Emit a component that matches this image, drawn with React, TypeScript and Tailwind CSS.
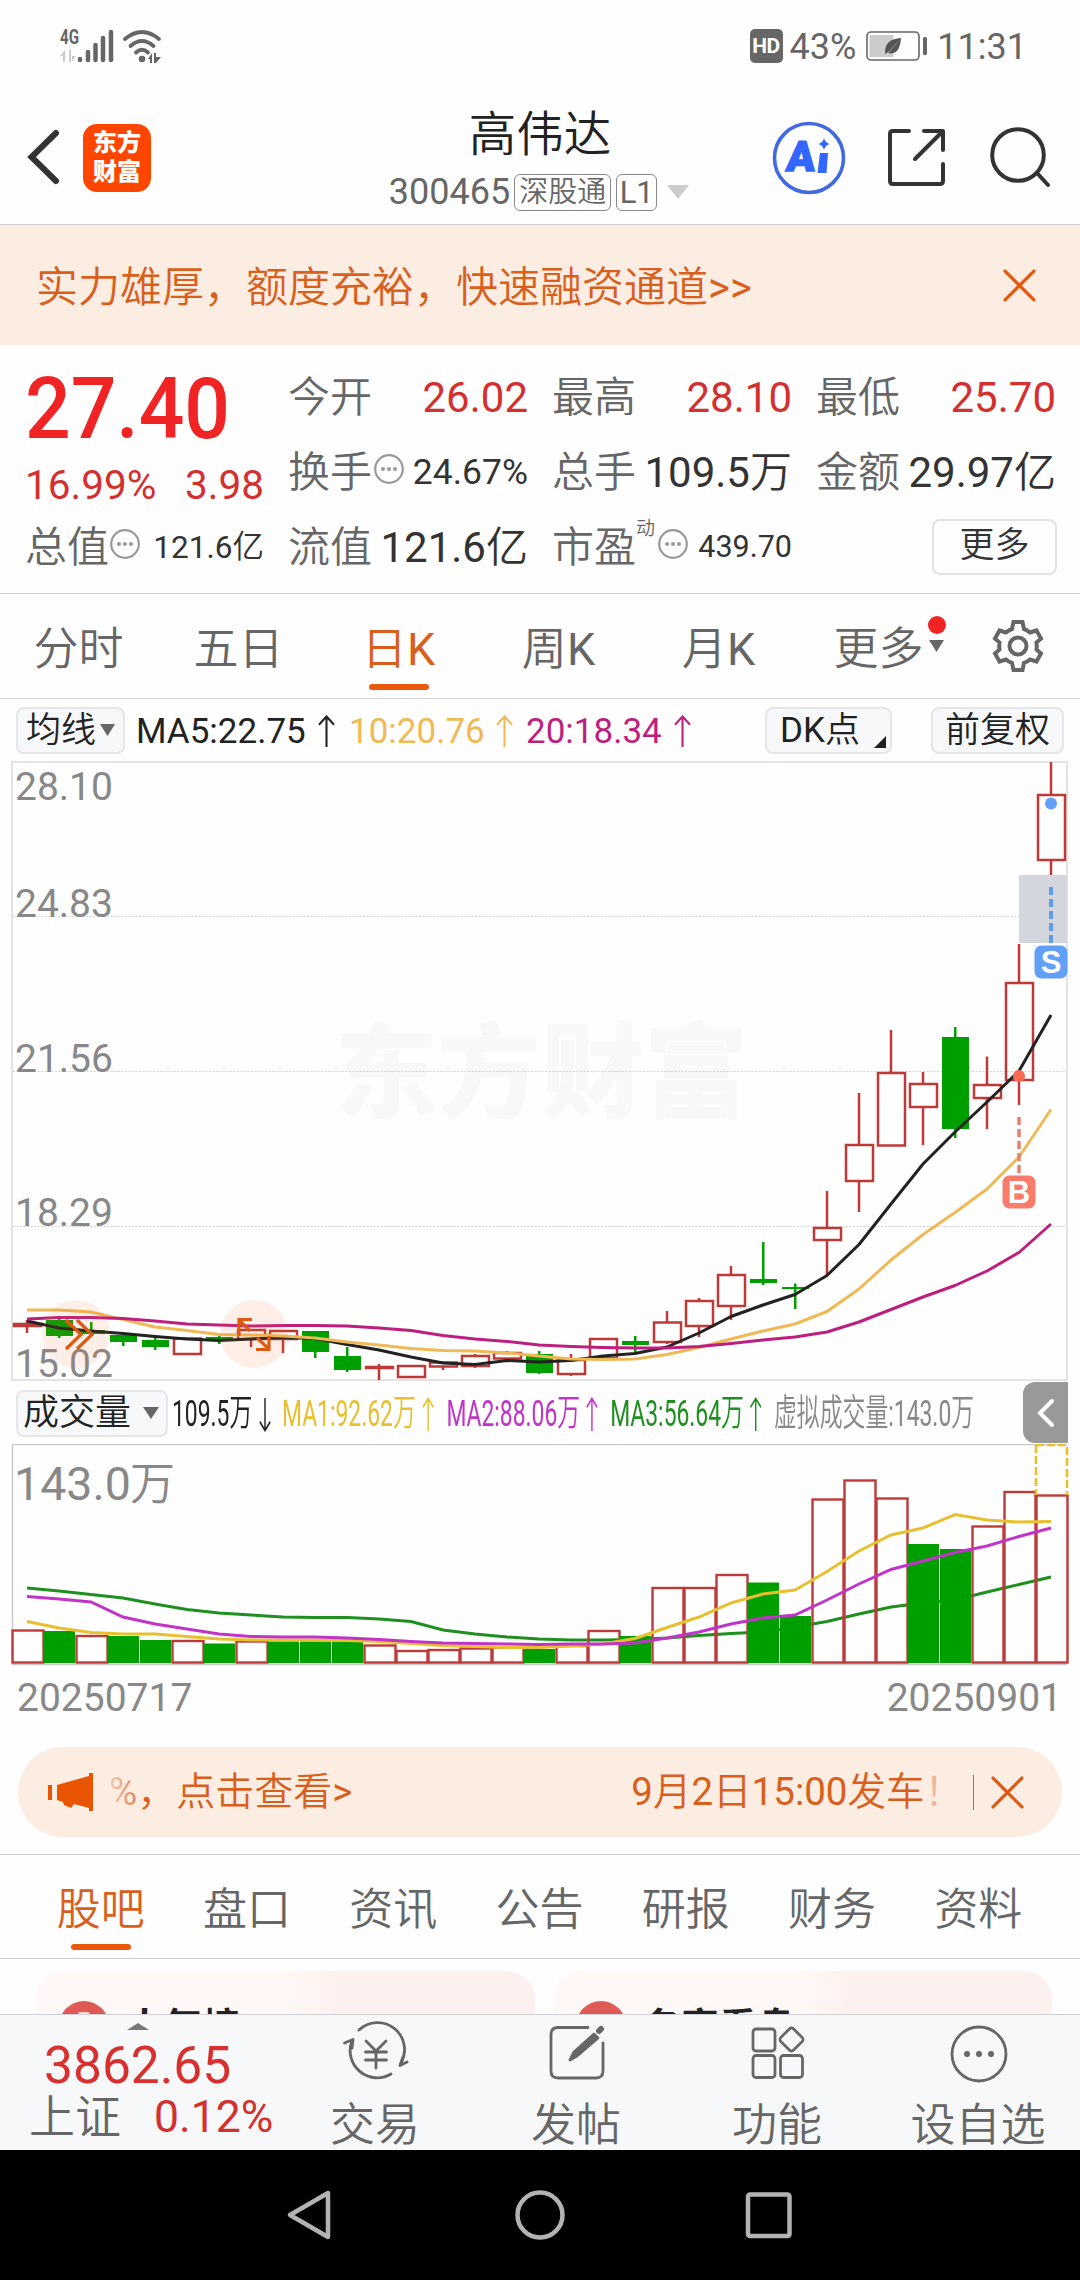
import React from 'react';

type Candle = [kind: 'r' | 'g', top: number, bottom: number, high: number, low: number];

const STEP = 32;
const FIRST_X = 27;

const cx = (i: number) => FIRST_X + STEP * i;

const candles: Candle[] = [
    ['r', 1324, 1326, 1320, 1333],
    ['g', 1320, 1336, 1318, 1338],
    ['g', 1330, 1334, 1322, 1334],
    ['g', 1335, 1342, 1335, 1346],
    ['g', 1340, 1347, 1338, 1350],
    ['r', 1338.5, 1354, 1338.5, 1354],
    ['g', 1337, 1339.5, 1335, 1344],
    ['r', 1330, 1339, 1330, 1347],
    ['r', 1331, 1339, 1331, 1353],
    ['g', 1331, 1352, 1331, 1358],
    ['g', 1356, 1370, 1347, 1372],
    ['r', 1367, 1368, 1364, 1380],
    ['r', 1366, 1377, 1366, 1378],
    ['r', 1362.5, 1366.5, 1362, 1370],
    ['r', 1356, 1366, 1354, 1368],
    ['r', 1353, 1358.5, 1351, 1359],
    ['g', 1354, 1373, 1351, 1374],
    ['r', 1360, 1374, 1354, 1376],
    ['r', 1339, 1358, 1339, 1358],
    ['g', 1341, 1345, 1336, 1353],
    ['r', 1322.5, 1342, 1311, 1344],
    ['r', 1301, 1326, 1298, 1337],
    ['r', 1275, 1306, 1266, 1320],
    ['g', 1279, 1283, 1242, 1285],
    ['g', 1287, 1289, 1283.5, 1309],
    ['r', 1228, 1240, 1191, 1276],
    ['r', 1145, 1181, 1093, 1212],
    ['r', 1073, 1145.5, 1030, 1145],
    ['r', 1084, 1107, 1072, 1145],
    ['g', 1037, 1129, 1027, 1138],
    ['r', 1085, 1098, 1056.5, 1129],
    ['r', 983, 1080, 944, 1105],
    ['r', 795, 860, 762, 875],
];

const ma5 = [
    1321, 1328, 1331, 1333.5, 1336.5, 1339, 1340.5, 1339, 1337.5, 1338.5, 1344.5, 1350, 1357, 1363, 1364.5, 1360.5, 1362,
    1360.5, 1356, 1353.5, 1347, 1333, 1316.5, 1305, 1294.5, 1275.5, 1244.5, 1204, 1164, 1132, 1102, 1071, 1015,
];
const ma10 = [
    1310, 1310, 1312, 1319.5, 1327, 1330.5, 1334.5, 1335, 1336, 1338, 1342, 1345, 1348.5, 1350.5, 1351, 1353, 1356, 1359,
    1359.5, 1359, 1354.5, 1347.5, 1339, 1331, 1324, 1311.5, 1289, 1260, 1234.5, 1212.5, 1189, 1157, 1109.5,
];
const ma20 = [
    1319, 1317.5, 1317.5, 1318.5, 1321, 1324, 1325, 1326, 1325.5, 1325.5, 1326, 1328, 1330.5, 1335.5, 1339, 1341.5, 1345,
    1346.5, 1347.5, 1348, 1348, 1346.5, 1343.5, 1340, 1337, 1332, 1322, 1309.5, 1297, 1285.5, 1271, 1252.5, 1224,
];

const volumes = [
    1630.5, 1631, 1636, 1636, 1640, 1641, 1643.5, 1641.5, 1641.5, 1641.5, 1641.5, 1645.5, 1651, 1650, 1648.5, 1647.5, 1649,
    1646, 1631, 1636, 1588, 1588, 1575, 1582.5, 1616, 1499.5, 1480.5, 1498.5, 1544, 1549, 1526.5, 1492, 1495.5,
];
const downVolumes = [1, 3, 4, 6, 8, 9, 10, 16, 19, 23, 24, 28, 29];
const volMa1 = [
    1621.5, 1628, 1632.5, 1634, 1634, 1636.5, 1639, 1640, 1640, 1640, 1640.5, 1641.5, 1643.5, 1645.5, 1646.5, 1647.5, 1647.5,
    1646, 1644, 1638.5, 1627.5, 1617, 1603, 1594, 1590, 1571.5, 1551, 1535, 1528, 1514.5, 1520, 1522, 1521.5,
];
const volMa2 = [
    1596.5, 1599, 1602, 1617, 1624, 1629, 1634, 1636.5, 1637, 1637, 1638, 1639.5, 1641.5, 1643, 1643.5, 1644, 1644.5, 1644,
    1644, 1643, 1638, 1632, 1624, 1618, 1615, 1600, 1584, 1569.5, 1561, 1552.5, 1546, 1536.5, 1528,
];
const volMa3 = [
    1588, 1591, 1594.5, 1598, 1604, 1609.5, 1613, 1615, 1617, 1617.5, 1617.5, 1619, 1621.5, 1630, 1634, 1637, 1639, 1640,
    1640, 1639.5, 1638, 1635.5, 1633.5, 1632, 1627, 1621.5, 1614, 1607, 1603, 1600, 1592, 1584.5, 1577,
];

const toPoints = (ys: number[]) => ys.map((y, i) => `${cx(i)},${y}`).join(' ');

const UP = '#bd3a38';
const DOWN = '#009f00';

const Arrow = ({ down = false, className }: { down?: boolean; className: string }) => (
    <svg viewBox="0 0 18 34" fill="none" stroke="currentColor" strokeWidth="2.2" preserveAspectRatio="none" className={className}>
        <path d={down ? 'M9 1V33M1 24L9 32.500L17 24' : 'M9 33V1M1 10L9 1.500L17 10'} />
    </svg>
);

const Close = ({ className }: { className: string }) => (
    <svg viewBox="0 0 32 32" fill="none" stroke="#e25a10" strokeWidth="3.200" strokeLinecap="round" className={className}>
        <path d="M2 2L30 30M30 2L2 30" />
    </svg>
);

const InfoDots = ({ className = '' }: { className?: string }) => (
    <svg viewBox="0 0 30 30" className={`h-[30px] w-[30px] shrink-0 ${className}`}>
        <circle cx="15" cy="15" r="13.8" fill="none" stroke="#999" strokeWidth="2.200" />
        <circle cx="9" cy="15" r="2" fill="#999" />
        <circle cx="15" cy="15" r="2" fill="#999" />
        <circle cx="21" cy="15" r="2" fill="#999" />
    </svg>
);

const Triangle = ({ className }: { className: string }) => (
    <svg viewBox="0 0 20 14" preserveAspectRatio="none" fill="currentColor" className={className}>
        <path d="M0 0H20L10 14Z" />
    </svg>
);

const StatusBar = () => (
    <div className="flex h-[90px] shrink-0 items-center justify-between pl-[60px] pr-[53px] pt-[2px] text-[#666]">
        <svg viewBox="0 0 104 36" className="h-[36px] w-[104px] overflow-visible">
            <text x="0" y="15.500" fontSize="21" fontWeight="700" fill="#666" textLength="19" lengthAdjust="spacingAndGlyphs">4G</text>
            <path d="M0 28L5 22V34H3V28ZM9 22H11V34H9ZM12 28H16L12 34Z" fill="#ccc" />
            <g stroke="#666" strokeWidth="4.500" strokeLinecap="round">
                <path d="M20 31V32M28 24V32M35.500 17V32M43 10V32M51 4V32" />
            </g>
            <g fill="none" stroke="#666" strokeWidth="3.800" strokeLinecap="round">
                <path d="M65 11Q82 -3 99 11" />
                <path d="M70.500 18Q82 8 93.500 18" />
                <path d="M76 24.500Q82 19 88 24.500" />
            </g>
            <circle cx="82" cy="31" r="3.300" fill="#666" />
            <path d="M88 31L92 25V35H90V31ZM94 25H96V29H101L96 35H94Z" fill="#666" />
        </svg>
        <div className="flex items-center text-[36px] leading-none">
            <span className="flex h-[34px] w-[33px] items-center justify-center rounded-[5px] bg-[#666] text-[21px] font-bold tracking-tight text-white">HD</span>
            <span className="ml-[7px] pt-[2px]">43%</span>
            <svg viewBox="0 0 62 30" className="ml-[10px] h-[30px] w-[62px]">
                <rect x="1" y="1" width="52" height="28" rx="4" fill="none" stroke="#666" strokeWidth="1.600" />
                <rect x="3.500" y="4" width="24" height="22" fill="#ccc" />
                <rect x="57" y="6" width="4" height="18" rx="1.500" fill="#666" />
                <path d="M19 22C19 11 25 8 35 7C34 18 31 24 22 22L34 9L20 23Z" fill="#555" />
            </svg>
            <span className="ml-[9px] pt-[2px]">11:31</span>
        </div>
    </div>
);

const Header = () => (
    <div className="flex h-[135px] shrink-0 border-b border-[#cfcfd2]">
        <div className="flex w-[387px] items-start pl-[25px] pt-[33px]">
            <svg viewBox="0 0 36 68" className="h-[68px] w-[36px]" fill="none" stroke="#333" strokeWidth="6" strokeLinecap="round">
                <path d="M31 10L6.500 34L31 58" />
            </svg>
            <div className="ml-[22px] mt-[1px] flex h-[68px] w-[68px] flex-col items-center justify-center gap-[4px] rounded-[14px] bg-[#ff4600] text-[24px] font-black leading-[25px] text-white">
                <span>东方</span>
                <span>财富</span>
            </div>
        </div>
        <div className="flex w-[304px] flex-col items-center pt-[20px]">
            <div className="pl-[2px] text-[47.5px] font-[350] leading-[50px] text-[#222]">高伟达</div>
            <div className="mt-[13px] flex h-[38px] items-center text-[#666]">
                <span className="text-[36px] leading-none">300465</span>
                <span className="ml-[4px] flex h-[37px] w-[97px] items-center justify-center rounded-[6px] border border-[#888] text-[29px] font-[350] leading-none">深股通</span>
                <span className="ml-[5px] flex h-[37px] w-[41px] items-center justify-center rounded-[6px] border border-[#888] text-[31px] leading-none">L1</span>
                <Triangle className="ml-[10px] h-[14px] w-[22px] text-[#ccc]" />
            </div>
        </div>
        <div className="flex flex-1 items-start pl-[80px] pt-[30px]">
            <svg viewBox="0 0 76 76" className="h-[76px] w-[76px]">
                <circle cx="38" cy="38" r="34.500" fill="none" stroke="#4169e1" strokeWidth="3.600" />
                <text x="15" y="51" fontSize="42" fontWeight="900" fill="#3366ff" stroke="#3366ff" strokeWidth="1.500" transform="skewX(-5) translate(4 0)">A</text>
                <path d="M49 33H57L55.500 53H46.500Z" fill="#3366ff" />
                <path d="M53 18Q54 22.500 58.500 24Q54 25.500 53 30Q52 25.500 47.500 24Q52 22.500 53 18Z" fill="#3366ff" />
            </svg>
            <svg viewBox="0 0 62 62" className="ml-[39px] mt-[6px] h-[62px] w-[62px]" fill="none" stroke="#333" strokeWidth="4" strokeLinecap="round" strokeLinejoin="round">
                <path d="M23 5H7Q4 5 4 8V55Q4 58 7 58H54Q57 58 57 55V38" />
                <path d="M38 5H57V24M57 5L29 33" />
            </svg>
            <svg viewBox="0 0 64 64" className="ml-[39px] mt-[6px] h-[64px] w-[64px]" fill="none" stroke="#333" strokeWidth="4" strokeLinecap="round">
                <circle cx="31" cy="29" r="25.800" />
                <path d="M50 47L61 59" />
            </svg>
        </div>
    </div>
);

const Promo = () => (
    <div className="flex h-[120px] shrink-0 items-center justify-between bg-[#fcede3] pl-[36px] pr-[44px] text-[#d8601c]">
        <span className="pt-[5px] text-[42px] font-[350] leading-none">实力雄厚，额度充裕，快速融资通道<span className="font-normal">&gt;&gt;</span></span>
        <Close className="h-[33px] w-[33px]" />
    </div>
);

const Quote = () => (
    <div className="flex h-[249px] shrink-0 border-b border-[#cfcfcf] pl-[25px] text-[42px] leading-none text-[#333]">
        <div className="flex w-[239px] flex-col pt-[15px]">
            <div className="h-[100px] origin-left scale-x-[0.94] text-[85.5px] font-medium leading-[98px] text-[#f02424]">27.40</div>
            <div className="flex h-[50px] items-center justify-between text-[40.5px] text-[#d33030]">
                <span>16.99%</span>
                <span>3.98</span>
            </div>
            <div className="flex h-[75px] items-center justify-between">
                <span className="flex items-center font-[350] text-[#666]">总值<InfoDots className="-mt-[8px] ml-px" /></span>
                <span className="text-[31.5px]">121.6<span className="font-[350]">亿</span></span>
            </div>
        </div>
        <div className="ml-[24px] flex w-[240px] flex-col pt-[15px]">
            <div className="flex h-[75px] items-center justify-between">
                <span className="font-[350] text-[#666]">今开</span>
                <span className="text-[#d33030]">26.02</span>
            </div>
            <div className="flex h-[75px] items-center justify-between">
                <span className="flex items-center font-[350] text-[#666]">换手<InfoDots className="-mt-[8px] ml-[2px]" /></span>
                <span className="text-[35.5px]">24.67%</span>
            </div>
            <div className="flex h-[75px] items-center justify-between">
                <span className="font-[350] text-[#666]">流值</span>
                <span>121.6<span className="font-[350]">亿</span></span>
            </div>
        </div>
        <div className="ml-[24px] flex w-[240px] flex-col pt-[15px]">
            <div className="flex h-[75px] items-center justify-between">
                <span className="font-[350] text-[#666]">最高</span>
                <span className="text-[#d33030]">28.10</span>
            </div>
            <div className="flex h-[75px] items-center justify-between">
                <span className="font-[350] text-[#666]">总手</span>
                <span>109.5<span className="font-[350]">万</span></span>
            </div>
            <div className="flex h-[75px] items-center justify-between">
                <span className="flex items-center font-[350] text-[#666]">
                    市盈
                    <span className="mb-[38px] text-[19px]">动</span>
                    <InfoDots className="-mt-[8px] ml-[3px]" />
                </span>
                <span className="text-[30.5px]">439.70</span>
            </div>
        </div>
        <div className="ml-[24px] flex w-[241px] flex-col pt-[15px]">
            <div className="flex h-[75px] items-center justify-between pr-px">
                <span className="font-[350] text-[#666]">最低</span>
                <span className="text-[#d33030]">25.70</span>
            </div>
            <div className="flex h-[75px] items-center justify-between pr-px">
                <span className="font-[350] text-[#666]">金额</span>
                <span>29.97<span className="font-[350]">亿</span></span>
            </div>
            <div className="flex h-[73px] items-center justify-end">
                <button className="h-[56px] w-[125px] rounded-[8px] border-2 border-[#e2e2e4] pb-[3px] text-[35px] font-[350] leading-none">更多</button>
            </div>
        </div>
    </div>
);

const periods = ['分时', '五日', '日K', '周K', '月K', '更多'];

const PeriodTabs = () => (
    <div className="flex h-[105px] shrink-0 border-b border-[#d4d4d4] text-[45px] leading-none text-[#666]">
        {periods.map((label) => (
            <div key={label} className="relative flex w-[160px] items-center justify-center pr-[3px] pt-[6px]">
                <span className={label === '日K' ? 'text-[#d8601c]' : ''}>
                    <span className="font-[350]">{label.replace('K', '')}</span>
                    {label.endsWith('K') && 'K'}
                </span>
                {label === '日K' && <span className="absolute bottom-[8px] left-[49px] h-[6px] w-[60px] rounded-full bg-[#e8590c]" />}
                {label === '更多' && (
                    <>
                        <span className="absolute left-[128px] top-[22px] h-[18px] w-[18px] rounded-full bg-[#f02424]" />
                        <Triangle className="absolute left-[129px] top-[46px] h-[12px] w-[15px]" />
                    </>
                )}
            </div>
        ))}
        <svg viewBox="-27 -27 54 54" className="ml-[31px] mt-[25px] h-[54px] w-[54px]" fill="none" stroke="#666" strokeWidth="4">
            <path d="M-4.500 -24H4.500L6 -17Q9 -16 12 -13.500L18.500 -15.500L23 -7.500L18.500 -3.500Q19 0 18.500 3.500L23 7.500L18.500 15.500L12 13.500Q9 16 6 17L4.500 24H-4.500L-6 17Q-9 16 -12 13.500L-18.500 15.500L-23 7.500L-18.500 3.500Q-19 0 -18.500 -3.500L-23 -7.500L-18.500 -15.500L-12 -13.500Q-9 -16 -6 -17Z" />
            <circle r="8.500" />
        </svg>
    </div>
);

const MaBar = () => (
    <div className="flex h-[61px] shrink-0 items-center pl-[16px] pr-[16px] pt-px text-[35px] leading-none text-[#222]">
        <button className="flex h-[47px] w-[109px] items-center rounded-[8px] border-2 border-[#e3e6ea] bg-[#f7f8fa] pl-[8px] font-[350]">
            <span>均线</span>
            <Triangle className="ml-[4px] h-[12px] w-[15px] text-[#666]" />
        </button>
        <span className="ml-[11px] w-[182px] pt-[3px]">MA5:22.75</span>
        <Arrow className="mt-[2px] h-[33px] w-[17px]" />
        <span className="ml-[14px] w-[147px] pt-[3px] text-[#efb955]">10:20.76</span>
        <Arrow className="mt-[2px] h-[33px] w-[17px] text-[#efb955]" />
        <span className="ml-[13px] w-[148px] pt-[3px] text-[#bd1f7f]">20:18.34</span>
        <Arrow className="mt-[2px] h-[33px] w-[17px] text-[#bd1f7f]" />
        <button className="relative ml-auto h-[47px] w-[127px] rounded-[8px] border-2 border-[#e3e6ea] bg-[#f7f8fa] pl-[13px] text-left">
            DK<span className="font-[350]">点</span>
            <svg viewBox="0 0 12 12" className="absolute bottom-[4px] right-[4px] h-[12px] w-[12px]"><path d="M12 0V12H0Z" fill="#222" /></svg>
        </button>
        <button className="ml-[39px] h-[47px] w-[133px] rounded-[8px] border-2 border-[#e3e6ea] bg-[#f7f8fa] font-[350]">前复权</button>
    </div>
);

const PriceChart = () => (
    <svg viewBox="0 760 1080 622" className="h-[622px] w-[1080px] shrink-0">
        <text x="334" y="1110" fontSize="103.500" fontWeight="900" fill="#f8f8f8">东方财富</text>
        <path d="M12 1381V762H1067V1380H12" fill="none" stroke="#e3e3e3" strokeWidth="2" />
        {[916.5, 1071.5, 1226.5].map((y) => (
            <line key={y} x1="13" x2="1067" y1={y} y2={y} stroke="#d2d2d2" strokeDasharray="2 1.500" />
        ))}
        <rect x="1019" y="875" width="48" height="68" fill="#d3d6dc" />
        <g fill="#888" fontSize="39">
            <text x="15" y="800">28.10</text>
            <text x="15" y="917">24.83</text>
            <text x="15" y="1072">21.56</text>
            <text x="15" y="1226">18.29</text>
            <text x="15" y="1377">15.02</text>
        </g>
        {candles.map(([kind, top, bottom, high, low], i) =>
            kind === 'r' ? (
                <g key={i} stroke={UP} strokeWidth="2.500" fill="none">
                    <rect x={cx(i) - 13} y={top} width="27" height={bottom - top} />
                    <path d={`M${cx(i)} ${high}V${top}M${cx(i)} ${bottom}V${low}`} />
                </g>
            ) : (
                <g key={i} fill={DOWN}>
                    <rect x={cx(i) - 13} y={top} width="27" height={bottom - top} />
                    <rect x={cx(i) - 1} y={high} width="2.500" height={low - high} />
                </g>
            ),
        )}
        <g fill="none" strokeWidth="3" strokeLinejoin="round">
            <polyline points={toPoints(ma5)} stroke="#222" />
            <polyline points={toPoints(ma10)} stroke="#efb955" />
            <polyline points={toPoints(ma20)} stroke="#bd1f7f" />
        </g>
        <circle cx="1051" cy="803.500" r="6" fill="#62a0f8" />
        <line x1="1051" x2="1051" y1="887" y2="943" stroke="#5f9cec" strokeWidth="4" strokeDasharray="8 4" />
        <rect x="1034.500" y="945.500" width="33" height="33" rx="7" fill="#62a0f8" />
        <text x="1051" y="973" fontSize="31" fontWeight="700" fill="#fff" textAnchor="middle" fontFamily="Liberation Sans, Arial, sans-serif">S</text>
        <circle cx="1019" cy="1076" r="6" fill="#f96a55" />
        <line x1="1019" x2="1019" y1="1117" y2="1173" stroke="#e8806f" strokeWidth="3.500" strokeDasharray="8 4" />
        <rect x="1002.500" y="1175.500" width="33" height="33" rx="7" fill="#f97b6b" />
        <text x="1019" y="1203" fontSize="31" fontWeight="700" fill="#fff" textAnchor="middle" fontFamily="Liberation Sans, Arial, sans-serif">B</text>
        <g fill="#f26a1b" fillOpacity="0.1">
            <circle cx="76" cy="1334" r="34" />
            <circle cx="254" cy="1334" r="34" />
        </g>
        <g fill="none" stroke="#dd5a12" strokeWidth="3.200">
            <path d="M66 1320L81 1334.500L66 1349M77 1320L92 1334.500L77 1349" />
            <path d="M252 1319.500H239V1336M239 1320L250 1331M269 1336V1349.500H256M269 1349L257 1338" />
        </g>
    </svg>
);

const VolumeBar = () => (
    <div className="relative flex h-[62px] shrink-0 items-center pl-[16px] leading-none">
        <button className="flex h-[47px] w-[152px] shrink-0 items-center rounded-[8px] border-2 border-[#e3e6ea] bg-[#f7f8fa] pl-[5px] text-[36px] font-[350] leading-none text-[#222]">
            成交量
            <Triangle className="ml-[12px] h-[12px] w-[16px] text-[#666]" />
        </button>
        <div className="ml-[4px] flex origin-left scale-x-[0.618] items-center whitespace-nowrap text-[37px]">
            <span className="flex w-[178px] items-center justify-between pr-[18px] text-[#222]">
                <span>109.5<span className="font-[350]">万</span></span>
                <Arrow down className="mt-[2px] h-[35px] w-[19px]" />
            </span>
            <span className="flex w-[266px] items-center justify-between pr-[20px] text-[#e8c02f]">
                <span>MA1:92.62<span className="font-[350]">万</span></span>
                <Arrow className="mt-[2px] h-[35px] w-[19px]" />
            </span>
            <span className="flex w-[265px] items-center justify-between pr-[20px] text-[#c035c8]">
                <span>MA2:88.06<span className="font-[350]">万</span></span>
                <Arrow className="mt-[2px] h-[35px] w-[19px]" />
            </span>
            <span className="flex w-[265px] items-center justify-between pr-[20px] text-[#1f901f]">
                <span>MA3:56.64<span className="font-[350]">万</span></span>
                <Arrow className="mt-[2px] h-[35px] w-[19px]" />
            </span>
            <span className="text-[#888]"><span className="font-[350]">虚拟成交量</span>:143.0<span className="font-[350]">万</span></span>
        </div>
        <div className="absolute right-[12px] top-0 flex h-[61px] w-[45px] items-center justify-center rounded-l-[12px] bg-[#999]">
            <svg viewBox="0 0 18 30" className="h-[30px] w-[18px]" fill="none" stroke="#fff" strokeWidth="4" strokeLinecap="round">
                <path d="M15 3L3 15L15 27" />
            </svg>
        </div>
    </div>
);

const VolumeChart = () => (
    <svg viewBox="0 1444 1080 222" className="h-[222px] w-[1080px] shrink-0">
        <path d="M1067 1444.500H12.500V1664.500H1067" fill="none" stroke="#c9c9c9" strokeWidth="1.400" />
        <text x="14" y="1500" fontSize="46.500" fill="#888">143.0</text>
        <text x="130" y="1500" fontSize="45" fontWeight="350" fill="#888">万</text>
        <polyline points={toPoints(volMa3)} fill="none" stroke="#1f901f" strokeWidth="3" />
        {volumes.map((top, i) =>
            downVolumes.includes(i) ? (
                <rect key={i} x={cx(i) - 15} y={top} width="31" height={1663 - top} fill={DOWN} />
            ) : (
                <rect key={i} x={cx(i) - 14.5} y={top} width={31} height={1662.5 - top} fill="none" stroke={UP} strokeWidth="2.400" />
            ),
        )}
        <path d="M1036 1445V1495M1036 1445H1067V1495" fill="none" stroke="#e8c02f" strokeWidth="2.600" strokeDasharray="8 3" />
        <g fill="none" strokeWidth="3">
            <polyline points={toPoints(volMa1)} stroke="#e8c02f" />
            <polyline points={toPoints(volMa2)} stroke="#c035c8" />
        </g>
    </svg>
);

const Notice = () => (
    <div className="mx-[18px] flex h-[90px] shrink-0 items-center rounded-full bg-[#fcede3] pl-[29px] pr-[38px] text-[38.5px] leading-none text-[#d8601c]">
        <svg viewBox="0 0 48 40" className="h-[40px] w-[48px]" fill="#ea5504">
            <path d="M1 13H5V28H1ZM10 13L42 4V1H46V39H42V36L27 32L24 36L17 33L16 30L10 28Z" />
        </svg>
        <span className="ml-[14px] bg-gradient-to-r from-[#f6cdb6] to-[#dd8357] bg-clip-text text-transparent">%</span>
        <span className="text-[39px] font-[350]">，点击查看</span>
        <span>&gt;</span>
        <span className="ml-auto">9<span className="font-[350]">月</span>2<span className="font-[350]">日</span>15:00<span className="font-[350]">发车</span></span>
        <span className="w-[48px] text-[#efb595]"><span className="font-[350]">！</span></span>
        <span className="h-[35px] w-[1.5px] bg-[#d8601c]" />
        <Close className="ml-[17px] h-[33px] w-[33px]" />
    </div>
);

const sections = ['股吧', '盘口', '资讯', '公告', '研报', '财务', '资料'];

const SectionTabs = () => (
    <div className="mt-[17px] flex h-[105px] shrink-0 border-y border-[#d0d0d0] px-[28px] text-[44px] font-[350] leading-none text-[#666]">
        {sections.map((label, i) => (
            <div key={label} className="relative flex flex-1 items-center justify-center pr-px pt-[6px]">
                <span className={i === 0 ? 'text-[#d8601c]' : ''}>{label}</span>
                {i === 0 && <span className="absolute bottom-[8px] h-[6px] w-[60px] rounded-full bg-[#e8590c]" />}
            </div>
        ))}
    </div>
);

const Cards = () => (
    <div className="flex h-[55px] shrink-0 gap-[18px] overflow-hidden pl-[36px] pt-[12px]">
        {['人气榜', '名家看盘'].map((title, i) => (
            <div key={title} className="flex h-[120px] w-[499px] items-start rounded-[28px] bg-gradient-to-r from-[#fff8f6] from-50% to-[#fdf1ef] to-60% pl-[23px] pt-[30px]">
                <span className="flex h-[50px] w-[50px] justify-center rounded-full bg-[#e05a55] pt-[12px] text-[16px] font-bold leading-none text-[#fbe3e0]">{i === 0 ? '号' : 'VIP'}</span>
                <span className="ml-[17px] mt-[6px] text-[38px] font-bold leading-[40px] text-[#222]">{title}</span>
                {i === 0 && <span className="ml-[14px] mt-[4px] text-[38px] leading-none text-[#888]">›</span>}
            </div>
        ))}
    </div>
);

const actions = [
    {
        label: '交易',
        icon: (
            <>
                <path d="M16 9A27 27 0 0 1 58 42M48 53A27 27 0 0 1 9 20" />
                <path d="M1.500 22L10 18.500L9 27M64 41L57 44.500L60 36" />
                <path d="M23 20L33 30L43 20M33 30V47M22.500 31H43.500M22.500 39H43.500" />
            </>
        ),
    },
    {
        label: '发帖',
        icon: (
            <>
                <path d="M44 6.500H14Q7 6.500 7 13.500V50Q7 57 14 57H52Q59 57 59 50V22" />
                <path d="M26 39L30 31L50 13L54 17L33 35Z" fill="#666" />
                <path d="M55 10L57 8" strokeWidth="6" />
            </>
        ),
    },
    {
        label: '功能',
        icon: (
            <>
                <rect x="8" y="8" width="22" height="22" rx="3" />
                <rect x="8" y="34.500" width="22" height="22" rx="3" />
                <rect x="35.500" y="34.500" width="22" height="22" rx="3" />
                <rect x="37.500" y="9.500" width="18" height="18" rx="3" transform="rotate(45 46.500 18.500)" />
            </>
        ),
    },
    {
        label: '设自选',
        icon: (
            <>
                <circle cx="33" cy="33" r="27" />
                <g fill="#666" stroke="none">
                    <circle cx="21" cy="33" r="3" />
                    <circle cx="33" cy="33" r="3" />
                    <circle cx="45" cy="33" r="3" />
                </g>
            </>
        ),
    },
];

const BottomBar = () => (
    <div className="relative flex h-[136px] shrink-0 border-t border-[#cfd0d3] bg-[#f7f8fa] leading-none">
        <svg viewBox="0 0 22 7" className="absolute left-[127px] top-[8px] h-[7px] w-[22px]"><path d="M0 7L11 0L22 7Z" fill="#777" /></svg>
        <div className="flex w-[275px] flex-col pl-[29px] pt-[24px]">
            <span className="pl-[15px] text-[51.5px] leading-[54px] text-[#d8302f]">3862.65</span>
            <span className="flex items-center">
                <span className="text-[46px] font-[350] leading-[48px] text-[#666]">上证</span>
                <span className="ml-[33px] text-[44.5px] text-[#d33030]">0.12%</span>
            </span>
        </div>
        {actions.map(({ label, icon }) => (
            <div key={label} className="flex w-[201px] flex-col items-center pt-[6px]">
                <svg viewBox="0 0 66 66" className="h-[66px] w-[66px]" fill="none" stroke="#666" strokeWidth="2.800" strokeLinecap="round" strokeLinejoin="round">
                    {icon}
                </svg>
                <span className="mt-[15px] pr-px text-[45px] font-[350] leading-[48px] text-[#666]">{label}</span>
            </div>
        ))}
    </div>
);

const SystemNav = () => (
    <div className="flex h-[130px] shrink-0 items-center bg-black pl-[285px]">
        <svg viewBox="0 0 512 60" className="h-[60px] w-[512px]" fill="none" stroke="#b3b3b3" strokeWidth="4.500" strokeLinejoin="round">
            <path d="M5 30L43 8V52Z" />
            <circle cx="255" cy="30" r="22.500" />
            <rect x="463" y="9.500" width="41.500" height="41.500" rx="2" />
        </svg>
    </div>
);

export default function App() {
    return (
        <div className="flex h-[2280px] w-[1080px] flex-col overflow-hidden whitespace-nowrap bg-[#fefefe] font-['Roboto','Noto_Sans_CJK_SC',sans-serif]">
            <StatusBar />
            <Header />
            <Promo />
            <Quote />
            <PeriodTabs />
            <div className="flex shrink-0 flex-col">
                <MaBar />
                <PriceChart />
                <VolumeBar />
                <VolumeChart />
                <div className="flex h-[81px] justify-between px-[17px] pt-[13px] text-[39px] leading-none text-[#888]">
                    <span>20250717</span>
                    <span className="pr-px">20250901</span>
                </div>
            </div>
            <Notice />
            <SectionTabs />
            <Cards />
            <BottomBar />
            <SystemNav />
        </div>
    );
}
